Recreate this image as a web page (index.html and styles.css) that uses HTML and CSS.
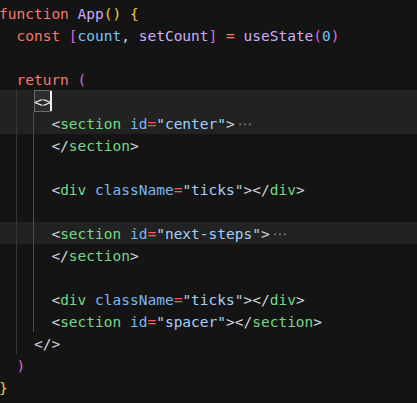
FILE: index.html
```html
<!DOCTYPE html>
<html>
<head>
<meta charset="utf-8">
<link rel="stylesheet" href="styles.css">
</head>
<body>
<div class="editor">
  <div class="ln"><span class="kw">function</span> <span class="fn">App</span><span class="b1">()</span> <span class="b1">{</span></div>
  <div class="ln">  <span class="kw">const</span> <span class="b2">[</span><span class="c">count</span><span class="p">, </span><span class="fn">setCount</span><span class="b2">]</span> <span class="kw">=</span> <span class="fn">useState</span><span class="b2">(</span><span class="c">0</span><span class="b2">)</span></div>
  <div class="ln"> </div>
  <div class="ln">  <span class="kw">return</span> <span class="b2">(</span></div>
  <div class="ln g2 cur">    <span class="match p">&lt;&gt;</span></div>
  <div class="ln g24 fold">      <span class="p">&lt;</span><span class="tag">section</span> <span class="attr">id</span><span class="eq">=</span><span class="str">"center"</span><span class="p">&gt;</span><span class="dots">⋯</span></div>
  <div class="ln g24">      <span class="p">&lt;/</span><span class="tag">section</span><span class="p">&gt;</span></div>
  <div class="ln g24"> </div>
  <div class="ln g24">      <span class="p">&lt;</span><span class="tag">div</span> <span class="attr">className</span><span class="eq">=</span><span class="str">"ticks"</span><span class="p">&gt;&lt;/</span><span class="tag">div</span><span class="p">&gt;</span></div>
  <div class="ln g24"> </div>
  <div class="ln g24 fold">      <span class="p">&lt;</span><span class="tag">section</span> <span class="attr">id</span><span class="eq">=</span><span class="str">"next-steps"</span><span class="p">&gt;</span><span class="dots">⋯</span></div>
  <div class="ln g24">      <span class="p">&lt;/</span><span class="tag">section</span><span class="p">&gt;</span></div>
  <div class="ln g24"> </div>
  <div class="ln g24">      <span class="p">&lt;</span><span class="tag">div</span> <span class="attr">className</span><span class="eq">=</span><span class="str">"ticks"</span><span class="p">&gt;&lt;/</span><span class="tag">div</span><span class="p">&gt;</span></div>
  <div class="ln g24">      <span class="p">&lt;</span><span class="tag">section</span> <span class="attr">id</span><span class="eq">=</span><span class="str">"spacer"</span><span class="p">&gt;&lt;/</span><span class="tag">section</span><span class="p">&gt;</span></div>
  <div class="ln g2">    <span class="p">&lt;/&gt;</span></div>
  <div class="ln">  <span class="b2">)</span></div>
  <div class="ln"><span class="b1">}</span></div>
</div>
</body>
</html>
```
FILE: styles.css
```css
html, body {
  margin: 0;
  padding: 0;
  background: #141414;
  height: 100%;
  overflow: hidden;
}

.editor {
  padding-top: 2px;
  margin-left: -1px;
  font-family: "DejaVu Sans Mono", "Liberation Mono", monospace;
  font-size: 14.5px;
  color: #c9d1d9;
}

.ln {
  height: 22px;
  box-sizing: border-box;
  padding-top: 3px;
  line-height: 19px;
  white-space: pre;
  background-repeat: no-repeat;
}

.g2 {
  background-image: linear-gradient(#363636, #363636);
  background-size: 1px 100%;
  background-position: calc(2ch - 0.5px) 0;
}

.g24 {
  background-image: linear-gradient(#363636, #363636), linear-gradient(#4a4a4a, #4a4a4a);
  background-size: 1px 100%, 1px 100%;
  background-position: calc(2ch - 0.5px) 0, calc(4ch - 1px) 0;
}

.cur, .fold {
  background-color: #222222;
}

.kw { color: #f47a6e; }
.fn { color: #d0adf8; }
.c { color: #79c0ff; }
.p { color: #d4d8de; }
.b1 { color: #f5c842; }
.b2 { color: #d86ccf; }
.tag { color: #74d985; }
.attr { color: #79b8f5; }
.eq { color: #f0605a; }
.str { color: #a5d0fa; }

.match {
  position: relative;
  display: inline-block;
  vertical-align: top;
  margin-top: -3px;
  padding-top: 3px;
  height: 22px;
  box-sizing: border-box;
  line-height: 19px;
  background: #2c2c2c;
  box-shadow: inset 0 0 0 1px #6a6a6a;
  color: #e8eaee;
}

.match::after {
  content: "";
  position: absolute;
  right: -1px;
  top: 1px;
  width: 2px;
  height: 20px;
  background: #f0f0f0;
}

.dots {
  font-family: "DejaVu Sans", sans-serif;
  color: #8a8a8a;
  margin-left: 3px;
}
```
